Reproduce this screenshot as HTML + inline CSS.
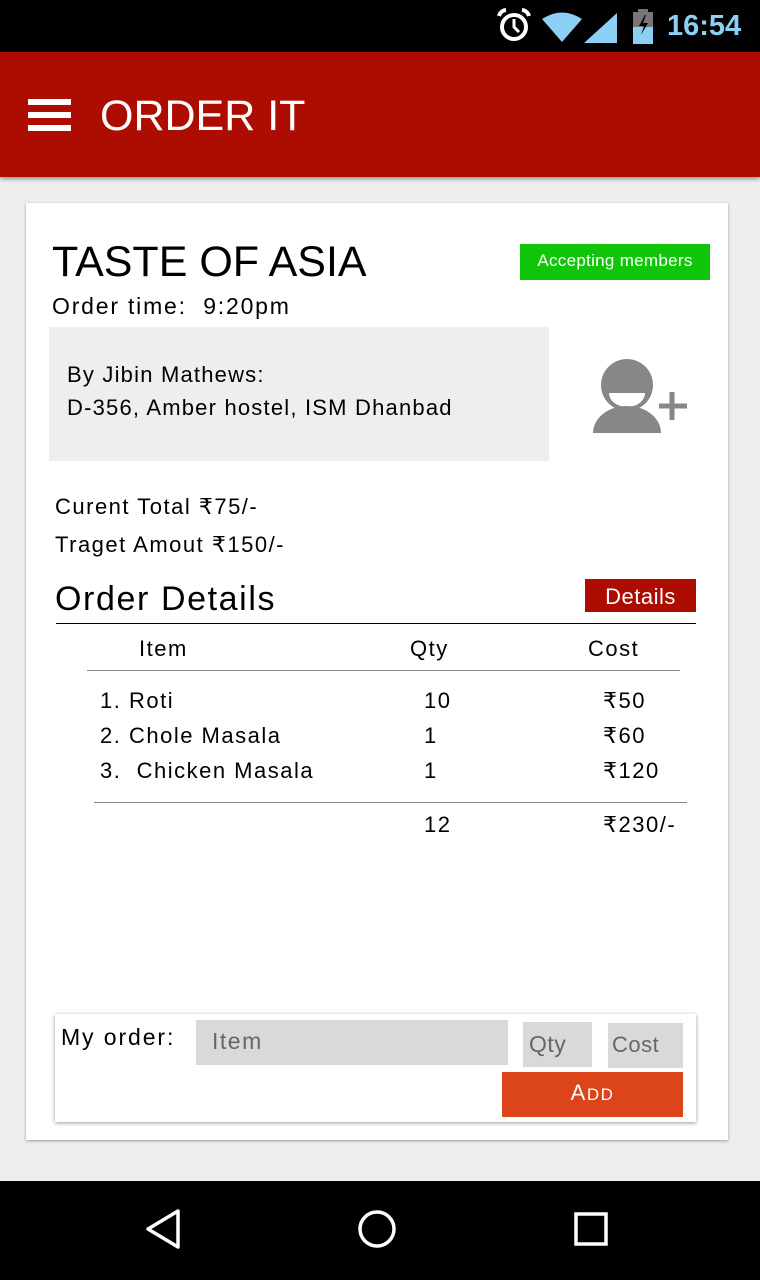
<!DOCTYPE html>
<html><head><meta charset="utf-8"><style>
*{margin:0;padding:0;box-sizing:border-box}
body{width:760px;height:1280px;background:#eeeeee;font-family:"Liberation Sans",sans-serif;position:relative;overflow:hidden;color:#000}
.a{position:absolute}
.t{position:absolute;white-space:nowrap;letter-spacing:1.5px}
</style></head><body>
<div class="a" style="left:0;top:0;width:760px;height:52px;background:#000"></div>
<svg class="a" style="left:0;top:0" width="760" height="52">
<circle cx="514" cy="27" r="12" fill="none" stroke="#fff" stroke-width="4"/>
<path d="M514 19v8l5 5" stroke="#fff" stroke-width="3" fill="none"/>
<path d="M499 16a8 8 0 0 1 7-6M529 16a8 8 0 0 0-7-6" stroke="#fff" stroke-width="4" fill="none"/>
<path d="M542 19Q562 6 582 19L562 42Z" fill="#8dcff4"/>
<path d="M617 13V43H584Z" fill="#8dcff4"/>
<rect x="633" y="12" width="20" height="32" fill="#777"/>
<rect x="638" y="9" width="10" height="4" fill="#777"/>
<rect x="633" y="27" width="20" height="17" fill="#8dcff4"/>
<path d="M645 15l-6 11h5l-3 9 7-12h-5l3-8z" fill="#000"/>
</svg>
<div class="t" style="left:667px;top:10px;font-size:29px;font-weight:bold;color:#8dcff4;letter-spacing:0">16:54</div>
<div class="a" style="left:0;top:52px;width:760px;height:125px;background:#ad0c00;box-shadow:0 2px 4px rgba(0,0,0,.4)"></div>
<div class="a" style="left:28px;top:99px;width:43px;height:6px;background:#fff"></div>
<div class="a" style="left:28px;top:112px;width:43px;height:6px;background:#fff"></div>
<div class="a" style="left:28px;top:125px;width:43px;height:6px;background:#fff"></div>
<div class="t" style="left:100px;top:92px;font-size:43px;color:#fff;letter-spacing:0">ORDER IT</div>
<div class="a" style="left:26px;top:203px;width:702px;height:937px;background:#fff;box-shadow:0 1px 3px rgba(0,0,0,.35)"></div>
<div class="t" style="left:52px;top:238px;font-size:43px;letter-spacing:0">TASTE OF ASIA</div>
<div class="a" style="left:520px;top:244px;width:190px;height:36px;background:#11c60a"></div>
<div class="t" style="left:520px;top:251px;width:190px;text-align:center;font-size:17px;color:#fff;letter-spacing:0.3px">Accepting members</div>
<div class="t" style="left:52px;top:293px;font-size:23px;letter-spacing:1.8px">Order time:&nbsp; 9:20pm</div>
<div class="a" style="left:49px;top:327px;width:500px;height:134px;background:#eeeeee"></div>
<div class="t" style="left:67px;top:358px;font-size:22px;line-height:33px;letter-spacing:1.2px">By Jibin Mathews:<br>D-356, Amber hostel, ISM Dhanbad</div>
<svg class="a" style="left:590px;top:358px" width="100" height="80">
<circle cx="37" cy="27" r="26" fill="#878787"/>
<path d="M19 35a18 14 0 0 0 36 0z" fill="#fff"/>
<path d="M3 75a34 27 0 0 1 68 0z" fill="#878787"/>
<path d="M82 34v28M69 48h28" stroke="#878787" stroke-width="5"/>
</svg>
<div class="t" style="left:55px;top:488px;font-size:22px;line-height:38px">Curent Total ₹75/-<br>Traget Amout ₹150/-</div>
<div class="t" style="left:55px;top:580px;font-size:34px;letter-spacing:1.6px">Order Details</div>
<div class="a" style="left:585px;top:579px;width:111px;height:33px;background:#ad0c00"></div>
<div class="t" style="left:585px;top:584px;width:111px;text-align:center;font-size:22px;color:#fff;letter-spacing:0.5px">Details</div>
<div class="a" style="left:56px;top:623px;width:640px;height:1px;background:#000"></div>
<div class="t" style="left:139px;top:636px;font-size:22px">Item</div>
<div class="t" style="left:410px;top:636px;font-size:22px">Qty</div>
<div class="t" style="left:588px;top:636px;font-size:22px">Cost</div>
<div class="a" style="left:87px;top:670px;width:593px;height:1px;background:#888"></div>
<div class="t" style="left:100px;top:683px;font-size:22px;line-height:35px">1. Roti<br>2. Chole Masala<br>3.&nbsp; Chicken Masala</div>
<div class="t" style="left:424px;top:683px;font-size:22px;line-height:35px">10<br>1<br>1</div>
<div class="t" style="left:603px;top:683px;font-size:22px;line-height:35px">₹50<br>₹60<br>₹120</div>
<div class="a" style="left:94px;top:802px;width:593px;height:1px;background:#888"></div>
<div class="t" style="left:424px;top:812px;font-size:22px">12</div>
<div class="t" style="left:603px;top:812px;font-size:22px">₹230/-</div>
<div class="a" style="left:55px;top:1014px;width:641px;height:108px;background:#fff;box-shadow:0 1px 4px rgba(0,0,0,.4)"></div>
<div class="t" style="left:61px;top:1024px;font-size:23px;letter-spacing:1.9px">My order:</div>
<div class="a" style="left:196px;top:1020px;width:312px;height:45px;background:#d9d9d9"></div>
<div class="t" style="left:212px;top:1028px;font-size:23px;color:#666">Item</div>
<div class="a" style="left:523px;top:1022px;width:69px;height:45px;background:#d9d9d9"></div>
<div class="t" style="left:529px;top:1031px;font-size:23px;color:#666;letter-spacing:0.5px">Qty</div>
<div class="a" style="left:608px;top:1023px;width:75px;height:45px;background:#d9d9d9"></div>
<div class="t" style="left:612px;top:1032px;font-size:22px;color:#666;letter-spacing:0.5px">Cost</div>
<div class="a" style="left:502px;top:1072px;width:181px;height:45px;background:#dc4419"></div>
<div class="t" style="left:502px;top:1080px;width:181px;text-align:center;font-size:22px;color:#fff">A<span style="font-size:17px">DD</span></div>
<div class="a" style="left:0;top:1181px;width:760px;height:99px;background:#000"></div>
<svg class="a" style="left:0;top:1181px" width="760" height="99">
<path d="M178 30L148 48L178 66Z" fill="none" stroke="#fff" stroke-width="3.5" stroke-linejoin="round"/>
<circle cx="377" cy="48" r="17" fill="none" stroke="#fff" stroke-width="3.5"/>
<rect x="576" y="33" width="30" height="30" fill="none" stroke="#fff" stroke-width="3.5"/>
</svg>
</body></html>
